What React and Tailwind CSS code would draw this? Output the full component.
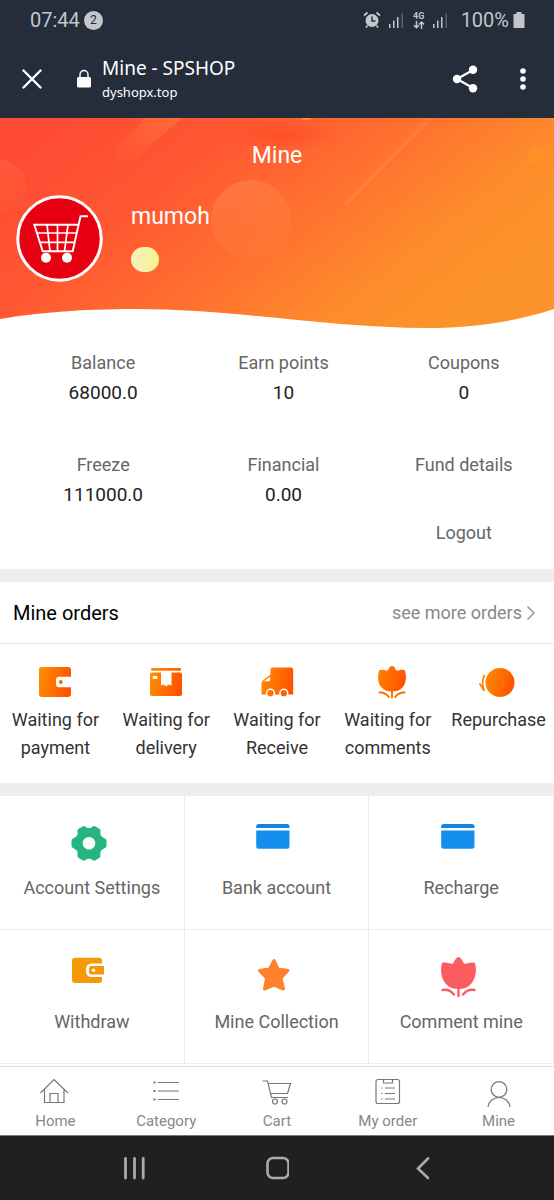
import React from 'react'

const AlarmIcon = () => (
  <svg className="w-[18px] h-[18px]" viewBox="0 0 18 18" fill="none" stroke="#c3c6cb" aria-hidden="true">
    <circle cx="9" cy="9.5" r="6.5" fill="#c3c6cb" stroke="none" />
    <path d="M1 4.5 4.5 1.5M17 4.5 13.5 1.5" strokeWidth="1.8" />
    <path d="M4.5 14.5 3 16.5M13.5 14.5 15 16.5" strokeWidth="1.8" />
    <path d="M9 5.5V10H12.5" stroke="#252c3a" strokeWidth="1.5" />
  </svg>
)

const SignalIcon = () => (
  <svg className="w-4 h-4" viewBox="0 0 16 16" fill="#c3c6cb" aria-hidden="true">
    <rect x="0" y="12" width="1.5" height="4" />
    <rect x="4" y="8.5" width="1.5" height="7.5" />
    <rect x="8" y="5" width="1.5" height="11" />
    <rect x="12.5" y="1" width="1.5" height="15" opacity="0.35" />
  </svg>
)

const BatteryIcon = () => (
  <svg className="w-3 h-[18px]" viewBox="0 0 12 18" fill="#c3c6cb" aria-hidden="true">
    <path d="M3.5 1h5v2H11.5V17H.5V3h3z" />
  </svg>
)

const StatusBar = () => (
  <div className="h-10 pl-[30px] pr-[29px] flex items-center justify-between text-[#c3c6cb]">
    <div className="flex items-center gap-1">
      <span className="text-xl">07:44</span>
      <span className="w-[19px] h-[19px] rounded-full bg-[#c3c6cb] text-[#252c3a] text-xs flex items-center justify-center">2</span>
    </div>
    <div className="flex items-center gap-2">
      <AlarmIcon />
      <SignalIcon />
      <div className="flex flex-col items-center">
        <span className="text-[9px] leading-[9px] font-bold">4G</span>
        <svg className="w-3 h-2" viewBox="0 0 12 8" fill="none" stroke="#c3c6cb" strokeWidth="1.5" aria-hidden="true">
          <path d="M3.5 0V6.5M1 4.200 3.5 6.700 6 4.200M8.5 8V1.200M6 3.500 8.500 1 11 3.500" />
        </svg>
      </div>
      <SignalIcon />
      <div className="flex items-center gap-1 pl-1">
        <span className="text-xl">100%</span>
        <BatteryIcon />
      </div>
    </div>
  </div>
)

const BrowserBar = () => (
  <div className="h-[78px] pl-[22px] pr-[25px] flex items-center font-['Noto_Sans',sans-serif] text-white">
    <button type="button" aria-label="Close">
      <svg className="w-5 h-5" viewBox="0 0 20 20" stroke="white" strokeWidth="2.4" strokeLinecap="round">
        <path d="M1.5 1.5 18.5 18.5M18.5 1.5 1.5 18.5" />
      </svg>
    </button>
    <svg className="w-4 h-5 ml-[34px]" viewBox="0 0 16 20" fill="none" aria-hidden="true">
      <rect x="1" y="8" width="14" height="10.5" rx="1.5" fill="white" />
      <path d="M4 8V5.5a4 4 0 0 1 8 0V8" stroke="white" strokeWidth="1.4" />
    </svg>
    <div className="flex-1 min-w-0 ml-[10px]">
      <p className="text-[19px] leading-[26px] truncate">Mine - SPSHOP</p>
      <p className="text-[13px] leading-[22px] truncate">dyshopx.top</p>
    </div>
    <button type="button" aria-label="Share">
      <svg className="w-[26px] h-7" viewBox="0 0 26 28" fill="white">
        <path d="M21 5 5 14 21 23" fill="none" stroke="white" strokeWidth="2.2" />
        <circle cx="21" cy="4.8" r="4.2" />
        <circle cx="5" cy="14" r="4.2" />
        <circle cx="21" cy="23.2" r="4.2" />
      </svg>
    </button>
    <button type="button" aria-label="More options" className="ml-[39px]">
      <svg className="w-3 h-6" viewBox="0 0 12 24" fill="white">
        <circle cx="6" cy="4" r="2.8" />
        <circle cx="6" cy="12" r="2.8" />
        <circle cx="6" cy="20" r="2.8" />
      </svg>
    </button>
  </div>
)

const HeroBackground = () => (
  <svg className="absolute inset-0 w-full h-full" viewBox="0 0 554 212" preserveAspectRatio="none" aria-hidden="true">
    <defs>
      <linearGradient id="heroFill" gradientUnits="userSpaceOnUse" x1="50" y1="0" x2="310" y2="330">
        <stop offset="0" stopColor="#ff4a34" />
        <stop offset="0.3" stopColor="#ff5832" />
        <stop offset="0.58" stopColor="#ff742f" />
        <stop offset="0.8" stopColor="#fd8d2b" />
        <stop offset="1" stopColor="#fc942b" />
      </linearGradient>
      <linearGradient id="bubble" x1="0" y1="0" x2="0.3" y2="1">
        <stop offset="0" stopColor="#ff9a60" stopOpacity="0.4" />
        <stop offset="1" stopColor="#ff8a40" stopOpacity="0.15" />
      </linearGradient>
      <linearGradient id="streak" x1="1" y1="0" x2="0" y2="1">
        <stop offset="0" stopColor="#ff8038" stopOpacity="0.6" />
        <stop offset="1" stopColor="#ff6a38" stopOpacity="0.1" />
      </linearGradient>
      <radialGradient id="smear">
        <stop offset="0" stopColor="#ff4020" stopOpacity="0.5" />
        <stop offset="1" stopColor="#ff4020" stopOpacity="0" />
      </radialGradient>
      <clipPath id="wave">
        <path d="M0 0H554V191C505 207 460 210 427 210C330 210 235 191 135 191C80 191 35 195 0 201Z" />
      </clipPath>
    </defs>
    <g clipPath="url(#wave)">
      <rect width="554" height="212" fill="url(#heroFill)" />
      <circle cx="0" cy="68" r="26" fill="url(#bubble)" opacity="0.5" />
      <path d="M145 0H182L134 42Q127 48 120 42Q114 35 120 27Z" fill="url(#streak)" />
      <ellipse cx="285" cy="17" rx="60" ry="16" fill="url(#smear)" />
      <circle cx="306" cy="-9" r="11" fill="#ff9030" />
      <circle cx="251" cy="102" r="40" fill="url(#bubble)" />
      <path d="M346 86 430 0" stroke="#ff8f50" strokeOpacity="0.35" strokeWidth="4" strokeLinecap="round" />
      <circle cx="535" cy="38" r="8" fill="#ff9423" opacity="0.7" />
    </g>
  </svg>
)

const Avatar = () => (
  <svg className="w-[87px] h-[87px]" viewBox="0 0 87 87" fill="none" stroke="white" role="img" aria-label="Avatar">
    <circle cx="43.5" cy="43.5" r="41.7" fill="#e60012" strokeWidth="3" />
    <path d="M72 21.3H64.5L56.7 56.3H26.7L18.3 29.7H62.5" strokeWidth="1.9" />
    <path d="M21 38H60.5M24 47.3H58.5M31 29.7 34 56.3M41.5 29.7V56.3M52 29.7 48.5 56.3" strokeWidth="1.7" />
    <circle cx="30" cy="62.7" r="5" fill="white" stroke="none" />
    <circle cx="51" cy="62.7" r="5" fill="white" stroke="none" />
  </svg>
)

const Hero = () => (
  <section className="relative pb-12">
    <HeroBackground />
    <div className="relative">
      <h1 className="pt-5 text-[23px] leading-9 text-center text-white">Mine</h1>
      <div className="mt-[21px] pl-4 flex gap-7">
        <Avatar />
        <div>
          <p className="text-[23px] leading-[44px] text-white">mumoh</p>
          <div className="mt-2 w-7 h-[25px] rounded-full bg-gradient-to-r from-[#f5f0c0] to-[#f4f48a]"></div>
        </div>
      </div>
    </div>
  </section>
)

const stats = [
  { label: 'Balance', value: '68000.0' },
  { label: 'Earn points', value: '10' },
  { label: 'Coupons', value: '0' },
  { label: 'Freeze', value: '111000.0' },
  { label: 'Financial', value: '0.00' },
  { label: 'Fund details' },
]

const Stats = () => (
  <section className="pt-[18px] pb-[21px] pl-[13px] text-center">
    <div className="grid grid-cols-3 gap-y-[42px]">
      {stats.map((stat) => (
        <div key={stat.label}>
          <p className="text-lg leading-[30px] text-[#666]">{stat.label}</p>
          {stat.value && <p className="text-[19px] leading-[30px] text-[#222]">{stat.value}</p>}
        </div>
      ))}
    </div>
    <div className="mt-2 grid grid-cols-3">
      <button type="button" className="col-start-3 text-lg leading-[30px] text-[#666]">Logout</button>
    </div>
  </section>
)

const Divider = () => <div className="h-[13px] bg-[#eee]"></div>

const OrderIcon = ({ children }) => (
  <svg className="w-9 h-8 overflow-visible" viewBox="0 0 36 32" aria-hidden="true">
    <defs>
      <linearGradient id="orangeFill" gradientUnits="userSpaceOnUse" x1="2" y1="12" x2="34" y2="20">
        <stop offset="0" stopColor="#ff8c00" />
        <stop offset="1" stopColor="#ff5000" />
      </linearGradient>
    </defs>
    {children}
  </svg>
)

const PaymentIcon = () => (
  <OrderIcon>
    <rect x="2" y="1" width="32" height="30" rx="3" fill="url(#orangeFill)" />
    <path d="M34.5 10.8H22a3 3 0 0 0-3 3v4.4a3 3 0 0 0 3 3H34.5z" fill="white" />
    <circle cx="23.8" cy="16" r="2" fill="#ff6a00" />
  </OrderIcon>
)

const DeliveryIcon = () => (
  <OrderIcon>
    <rect x="3" y="2" width="30" height="2.8" rx="1.2" fill="url(#orangeFill)" />
    <path d="M4 6.6H13V19.500L15.500 18.500 18 20.500 20.500 18.500 23.500 19.500V6.600H32a2 2 0 0 1 2 2V28a2 2 0 0 1-2 2H4a2 2 0 0 1-2-2V8.600a2 2 0 0 1 2-2Z" fill="url(#orangeFill)" />
    <rect x="4.5" y="9.7" width="5" height="3.3" rx="1.5" fill="white" />
  </OrderIcon>
)

const TruckIcon = () => (
  <OrderIcon>
    <path d="M13.5 1.5H32a2.2 2.2 0 0 1 2.2 2.2V28.5H2.5V17.5a4 4 0 0 1 1.6-3.2L11.500 8.500V3.500a2 2 0 0 1 2-2Z" fill="url(#orangeFill)" />
    <path d="M11 10.8 5 15.2H10a1.2 1.2 0 0 0 1.2-1.2Z" fill="white" />
    <circle cx="11.5" cy="27.2" r="3.9" fill="#ff7000" stroke="white" strokeWidth="1.5" />
    <circle cx="24.8" cy="27.2" r="3.9" fill="#ff6000" stroke="white" strokeWidth="1.5" />
  </OrderIcon>
)

// drawn right of centre, in line with the label's last word
const TulipIcon = () => (
  <OrderIcon>
    <path d="M22 0C24 0 25 2 26 4.200C28 5.500 31 2.500 35 4.500C36.500 11 36.500 17 32.500 21.500C29.500 24.500 26 25.500 22 25.500S14.500 24.500 11.500 21.500C7.500 17 7.500 11 9 4.500C13 2.500 16 5.500 18 4.200C19 2 20 0 22 0Z" fill="url(#orangeFill)" />
    <path d="M22 24V31.500M9.500 26.500C14 26 16.500 28 18.800 31M34.500 26.500C30 26 27.500 28 25.200 31" fill="none" stroke="#ff7000" strokeWidth="2" strokeLinecap="round" />
  </OrderIcon>
)

const RepurchaseIcon = () => (
  <OrderIcon>
    <circle cx="19" cy="16.5" r="14.5" fill="url(#orangeFill)" />
    <path d="M19 8Q25 16 19 25" fill="none" stroke="#ff8a20" strokeWidth="1" opacity="0.5" />
    <path d="M3.5 9Q0 16 3 24.5L-1.5 17.5" fill="none" stroke="#ff8000" strokeWidth="1.7" strokeLinejoin="round" />
  </OrderIcon>
)

const orders = [
  { icon: PaymentIcon, label: 'Waiting for payment' },
  { icon: DeliveryIcon, label: 'Waiting for delivery' },
  { icon: TruckIcon, label: 'Waiting for Receive' },
  { icon: TulipIcon, label: 'Waiting for comments' },
  { icon: RepurchaseIcon, label: 'Repurchase' },
]

const Orders = () => (
  <section>
    <div className="h-[62px] pl-[13px] pr-[18px] flex items-center justify-between border-b border-[#e8e8e8]">
      <h2 className="text-xl text-black">Mine orders</h2>
      <a href="#orders" className="flex items-center gap-1 text-lg text-[#888]">
        see more orders
        <svg className="w-[10px] h-4" viewBox="0 0 10 16" fill="none" stroke="#999" strokeWidth="1.5" aria-hidden="true">
          <path d="M1.5 1.5 8 8 1.5 14.5" />
        </svg>
      </a>
    </div>
    <div className="pt-[22px] pb-[21px] grid grid-cols-5">
      {orders.map((order) => (
        <a key={order.label} href="#orders" className="px-1 flex flex-col items-center gap-2 text-center">
          <order.icon />
          <span className="text-lg leading-7 text-[#333]">{order.label}</span>
        </a>
      ))}
    </div>
  </section>
)

const GearIcon = () => (
  <>
    <path d="M12.5 4.5C15.5 2.5 15 6 19 6S22.5 2.500 25.500 4.500L28.500 6.200C32.500 8.500 29 10 31 13.500S36.500 15.500 36.500 19V23.500C36.500 27 33 25.500 31 29S32.500 34 28.500 36.500L25.500 38.200C22.500 40 23 36.800 19 36.800S15.500 40 12.500 38.200L9.500 36.500C5.500 34 9 32.500 7 29S1.500 27 1.500 23.500V19C1.500 15.500 5 17 7 13.500S5.500 8.500 9.500 6.200Z" fill="#26b47f" />
    <circle cx="19" cy="21.3" r="6.3" fill="white" />
  </>
)

const CardIcon = () => (
  <>
    <path d="M2.2 6V4.500a2.500 2.500 0 0 1 2.500-2.500H33a2.500 2.500 0 0 1 2.500 2.500V6Z" fill="#1683dd" />
    <path d="M2.2 8.500H35.500V24.300a2.500 2.500 0 0 1-2.500 2.500H4.700a2.500 2.500 0 0 1-2.500-2.500Z" fill="#158fee" />
  </>
)

const WithdrawIcon = () => (
  <>
    <path d="M5 1.700H29a3 3 0 0 1 3 3V7.500H21.500A5.500 5.500 0 0 0 16 13v2.500a5.500 5.500 0 0 0 5.500 5.500H32v3a3 3 0 0 1-3 3H5a3 3 0 0 1-3-3V4.700a3 3 0 0 1 3-3Z" fill="#f49a09" />
    <path d="M21 10H34V18.500H21a2 2 0 0 1-2-2V12a2 2 0 0 1 2-2Z" fill="#f49a09" />
    <circle cx="23.5" cy="14.2" r="1.7" fill="white" />
  </>
)

const StarIcon = () => (
  <path d="M20 4.5 24 13 34 14.5 27 22 29.500 33 20 29 10.500 33 12.500 22 5.500 14.500 15.500 13Z" fill="#fd802c" stroke="#fd802c" strokeWidth="3" strokeLinejoin="round" />
)

const CommentIcon = () => (
  <>
    <path d="M19.5 1C21.5 1 23 4 25 7.500C28 8.500 31 5.500 36 7C38 14 37 22 32 28C28.500 32 24 33 19.500 33S10.500 32 7 28C2 22 1 14 3 7C8 5.500 11 8.500 14 7.500C16 4 17.500 1 19.500 1Z" fill="#fb5c60" />
    <path d="M19.5 31V40M3.500 34C9 33 12.500 35.500 15 38.500M35.500 34C30 33 26.500 35.500 24 38.500" fill="none" stroke="#fb5c60" strokeWidth="2.4" strokeLinecap="round" />
  </>
)

const services = [
  { icon: GearIcon, label: 'Account Settings' },
  { icon: CardIcon, label: 'Bank account' },
  { icon: CardIcon, label: 'Recharge' },
  { icon: WithdrawIcon, label: 'Withdraw' },
  { icon: StarIcon, label: 'Mine Collection' },
  { icon: CommentIcon, label: 'Comment mine' },
]

const Services = () => (
  <section className="grid grid-cols-3">
    {services.map((service) => (
      <a
        key={service.label}
        href="#service"
        className="pt-[26px] pb-[27px] flex flex-col items-center gap-2 border-r border-b border-[#ececec]"
      >
        <svg className="w-11 h-11" viewBox="0 0 44 44" aria-hidden="true">
          <service.icon />
        </svg>
        <span className="text-lg leading-7 text-[#666]">{service.label}</span>
      </a>
    ))}
  </section>
)

const tabs = [
  {
    label: 'Home',
    drawing: <path d="M.5 17 14 3.500 28 17M4.500 13.500V26.500H24V13.500M10 26.500V17.500H18V26.500" />,
  },
  {
    label: 'Category',
    drawing: (
      <>
        <path d="M7 6.500H28M7 15H28M7 23.500H28" />
        <path d="M2.500 6.500H4.500M2.500 15H4.500M2.500 23.500H4.500" strokeWidth="2" />
      </>
    ),
  },
  {
    label: 'Cart',
    drawing: (
      <>
        <path d="M.5 5H5.500L9.500 21.500H26M6.500 7.500H28.500L25.500 17.500H8.500" />
        <circle cx="13" cy="25.5" r="2.5" />
        <circle cx="22.5" cy="25.5" r="2.5" />
      </>
    ),
  },
  {
    label: 'My order',
    drawing: (
      <>
        <path d="M10.500 3.500H5a2 2 0 0 0-2 2V25.500a2 2 0 0 0 2 2H24.500a2 2 0 0 0 2-2V5.500a2 2 0 0 0-2-2H19.500" />
        <path d="M10.500 3.500H19.500V7H10.500ZM12 12H22M12 17.500H22M12 23H22M8 12H9.500M8 17.500H9.500M8 23H9.500" />
      </>
    ),
  },
  {
    label: 'Mine',
    drawing: (
      <>
        <circle cx="15" cy="13.5" r="7.8" />
        <path d="M4 31C4.500 25.500 9 21.500 15 21.500S25.500 25.500 26 31" />
      </>
    ),
  },
]

const TabBar = () => (
  <nav className="h-[69px] pt-[9px] grid grid-cols-5 bg-white border-t border-[#ddd]">
    {tabs.map((tab) => (
      <a key={tab.label} href="#tab" className="flex flex-col items-center gap-[3px] text-[#888]">
        <svg className="w-[30px] h-8" viewBox="0 0 30 32" fill="none" stroke="#777" strokeWidth="1.2" aria-hidden="true">
          {tab.drawing}
        </svg>
        <span className="text-[15px] leading-5">{tab.label}</span>
      </a>
    ))}
  </nav>
)

const SystemNav = () => (
  <div className="h-[65px] flex items-center justify-center gap-[120px] bg-[#202020] border-t border-[#777]">
    <button type="button" aria-label="Recent apps">
      <svg className="w-6 h-6" viewBox="0 0 24 24" stroke="#aaa" strokeWidth="2.8" strokeLinecap="round">
        <path d="M4.500 2.500V22M13.500 2.500V22M22.200 2.500V22" />
      </svg>
    </button>
    <button type="button" aria-label="Home screen">
      <svg className="w-6 h-6" viewBox="0 0 24 24" fill="none" stroke="#aaa" strokeWidth="2.6">
        <rect x="2.5" y="2" width="21" height="20" rx="5.5" />
      </svg>
    </button>
    <button type="button" aria-label="Back">
      <svg className="w-6 h-6" viewBox="0 0 24 24" fill="none" stroke="#aaa" strokeWidth="2.6" strokeLinecap="round">
        <path d="M19 2.500 9 12.500 19 22" />
      </svg>
    </button>
  </div>
)

const App = () => {
  return (
    <div className="min-h-screen flex flex-col bg-white font-[Roboto,sans-serif]">
      <header className="bg-[#252c3a]">
        <StatusBar />
        <BrowserBar />
      </header>
      <main className="flex-1">
        <Hero />
        <Stats />
        <Divider />
        <Orders />
        <Divider />
        <Services />
      </main>
      <TabBar />
      <SystemNav />
    </div>
  )
}

export default App
